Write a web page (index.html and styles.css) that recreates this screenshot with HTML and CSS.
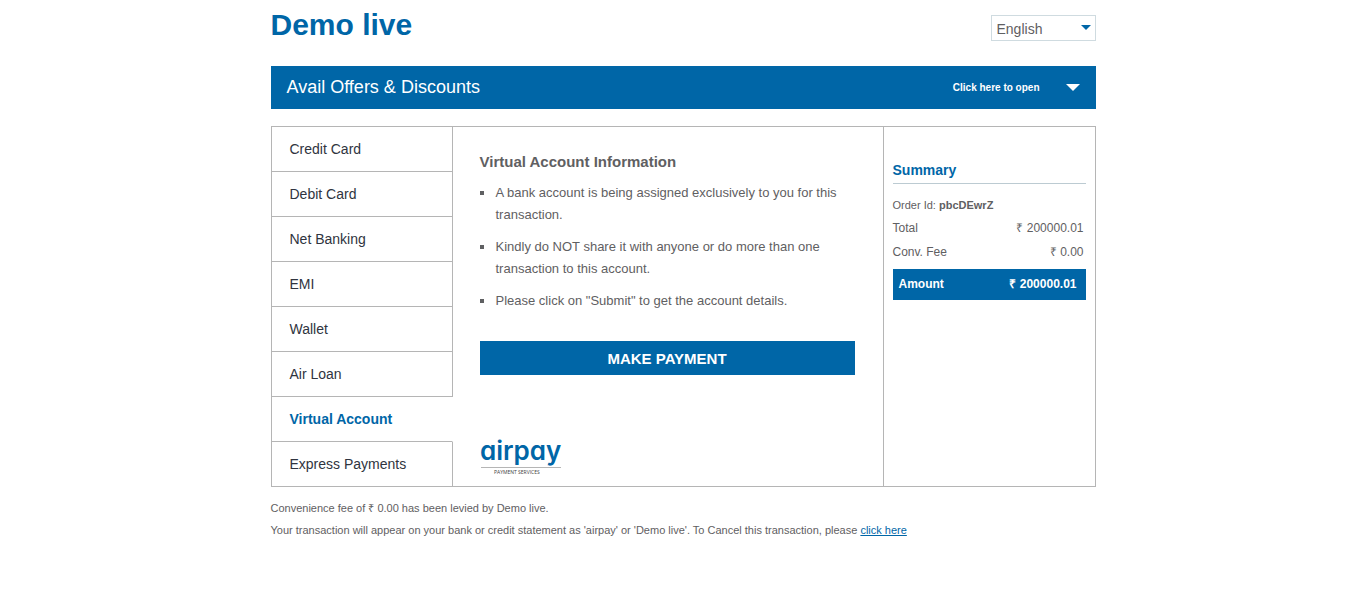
FILE: index.html
```html
<!DOCTYPE html>
<html lang="en">
<head>
<meta charset="utf-8">
<meta name="viewport" content="width=device-width, initial-scale=1">
<title>Demo live</title>
<link rel="stylesheet" href="styles.css">
</head>
<body>
<div class="page">
  <header class="header">
    <h1 class="merchant">Demo live</h1>
    <div class="language">
      <select class="language-select" aria-label="Language">
        <option>English</option>
      </select>
      <svg class="language-arrow" width="10" height="5" viewBox="0 0 10 5" aria-hidden="true"><path d="M0 0H10L5 5Z" fill="#0066a7"/></svg>
    </div>
  </header>

  <button class="offers" type="button">
    <span class="offers-title">Avail Offers &amp; Discounts</span>
    <span class="offers-hint">Click here to open</span>
    <svg width="14" height="7" viewBox="0 0 14 7" aria-hidden="true"><path d="M0 0H14L7 7Z" fill="#fff"/></svg>
  </button>

  <main class="panel">
    <nav class="methods">
      <a class="method" href="#">Credit Card</a>
      <a class="method" href="#">Debit Card</a>
      <a class="method" href="#">Net Banking</a>
      <a class="method" href="#">EMI</a>
      <a class="method" href="#">Wallet</a>
      <a class="method" href="#">Air Loan</a>
      <a class="method method-active" href="#" aria-current="page">Virtual Account</a>
      <a class="method" href="#">Express Payments</a>
    </nav>

    <section class="content">
      <h2 class="content-title">Virtual Account Information</h2>
      <ul class="notes">
        <li class="note">A bank account is being assigned exclusively to you for this transaction.</li>
        <li class="note">Kindly do NOT share it with anyone or do more than one transaction to this account.</li>
        <li class="note">Please click on "Submit" to get the account details.</li>
      </ul>
      <button class="pay" type="button">MAKE PAYMENT</button>
      <svg class="logo" width="90" height="48" viewBox="0 0 90 48" role="img" aria-label="airpay payment services">
        <text class="logo-name" x="0" y="32">airpay</text>
        <path d="M1 39.5H81" stroke="#b5b5b5"/>
        <text class="logo-tag" x="14" y="46">PAYMENT SERVICES</text>
      </svg>
    </section>

    <aside class="summary">
      <h2 class="summary-title">Summary</h2>
      <p class="order">Order Id: <b>pbcDEwrZ</b></p>
      <dl class="rows">
        <div class="row"><dt>Total</dt><dd>₹ 200000.01</dd></div>
        <div class="row"><dt>Conv. Fee</dt><dd>₹ 0.00</dd></div>
        <div class="row row-amount"><dt>Amount</dt><dd>₹ 200000.01</dd></div>
      </dl>
    </aside>
  </main>

  <footer class="footer">
    <p>Convenience fee of ₹ 0.00 has been levied by Demo live.</p>
    <p>Your transaction will appear on your bank or credit statement as 'airpay' or 'Demo live'. To Cancel this transaction, please <a class="cancel" href="#">click here</a></p>
  </footer>
</div>
</body>
</html>
```
FILE: styles.css
```css
* {
  box-sizing: border-box;
}

body {
  margin: 0;
  background: #fff;
  color: #5f6062;
  font-family: "Liberation Sans", Arial, sans-serif;
  font-size: 12px;
}

h1, h2, p, ul, dl, dd {
  margin: 0;
  padding: 0;
}

button, select {
  font-family: inherit;
}

.page {
  max-width: 825px;
  margin: 0 auto;
}

.header {
  display: flex;
  justify-content: space-between;
  align-items: flex-start;
  padding: 8px 0 24px;
}

.merchant {
  color: #0066a7;
  font-size: 30px;
  line-height: 34px;
}

.language {
  position: relative;
  margin-top: 7px;
}

.language-select {
  display: block;
  width: 105px;
  height: 26px;
  padding: 2px 5px 0;
  border: 1px solid #cfdbe0;
  border-radius: 0;
  background: #fff;
  color: #5f6062;
  font-size: 14px;
  appearance: none;
}

.language-arrow {
  position: absolute;
  top: 10px;
  right: 5px;
  pointer-events: none;
}

.offers {
  display: flex;
  align-items: center;
  width: 100%;
  height: 43px;
  padding: 0 16px;
  border: 0;
  background: #0066a7;
  color: #fff;
  text-align: left;
}

.offers-title {
  flex: 1;
  font-size: 18px;
}

.offers-hint {
  margin-right: 26px;
  font-size: 10px;
  font-weight: bold;
}

.panel {
  display: grid;
  grid-template-columns: 181px 1fr 212px;
  margin-top: 17px;
  border: 1px solid #b5b5b5;
}

.methods {
  display: flex;
  flex-direction: column;
}

.method {
  flex: 1;
  padding: 0 18px;
  border-right: 1px solid #b5b5b5;
  border-bottom: 1px solid #b5b5b5;
  color: #2f3440;
  font-size: 14px;
  line-height: 44px;
  text-decoration: none;
}

.method:last-child {
  border-bottom: 0;
}

.method-active {
  border-right-color: transparent;
  color: #0066a7;
  font-weight: bold;
}

.content {
  padding: 26px 28px 10px 27px;
}

.content-title {
  font-size: 15px;
  line-height: 18px;
}

.notes {
  display: grid;
  gap: 10px;
  margin-top: 11px;
  list-style: none;
}

.note {
  display: flex;
  gap: 12px;
  font-size: 13px;
  line-height: 22px;
}

.note::before {
  content: "";
  flex: none;
  width: 4px;
  height: 4px;
  margin-top: 9px;
  background: #5f6062;
}

.pay {
  display: block;
  width: 100%;
  height: 34px;
  margin-top: 29px;
  padding: 0;
  border: 0;
  background: #0066a7;
  color: #fff;
  font-size: 15px;
  font-weight: bold;
}

.logo {
  display: block;
  margin-top: 53px;
}

.logo-name {
  fill: #0066a7;
  font-family: Inter, sans-serif;
  font-size: 26px;
  font-weight: 600;
  font-feature-settings: "cv11";
}

.logo-tag {
  fill: #3c3c3c;
  font-family: "Open Sans", sans-serif;
  font-size: 5px;
}

.summary {
  padding: 34px 9px;
  border-left: 1px solid #b5b5b5;
}

.summary-title {
  padding-bottom: 4px;
  border-bottom: 1px solid #bccbd2;
  color: #0066a7;
  font-size: 14px;
  line-height: 18px;
}

.order {
  margin-top: 10px;
  font-size: 11px;
  line-height: 22px;
}

.row {
  display: flex;
  justify-content: space-between;
  padding-right: 2px;
  line-height: 24px;
}

.row-amount {
  margin-top: 5px;
  padding: 0 9px 0 6px;
  background: #0066a7;
  color: #fff;
  font-weight: bold;
  line-height: 31px;
}

.footer {
  margin-top: 10px;
  font-size: 11px;
  line-height: 22px;
}

.cancel {
  color: #0066a7;
}
```
